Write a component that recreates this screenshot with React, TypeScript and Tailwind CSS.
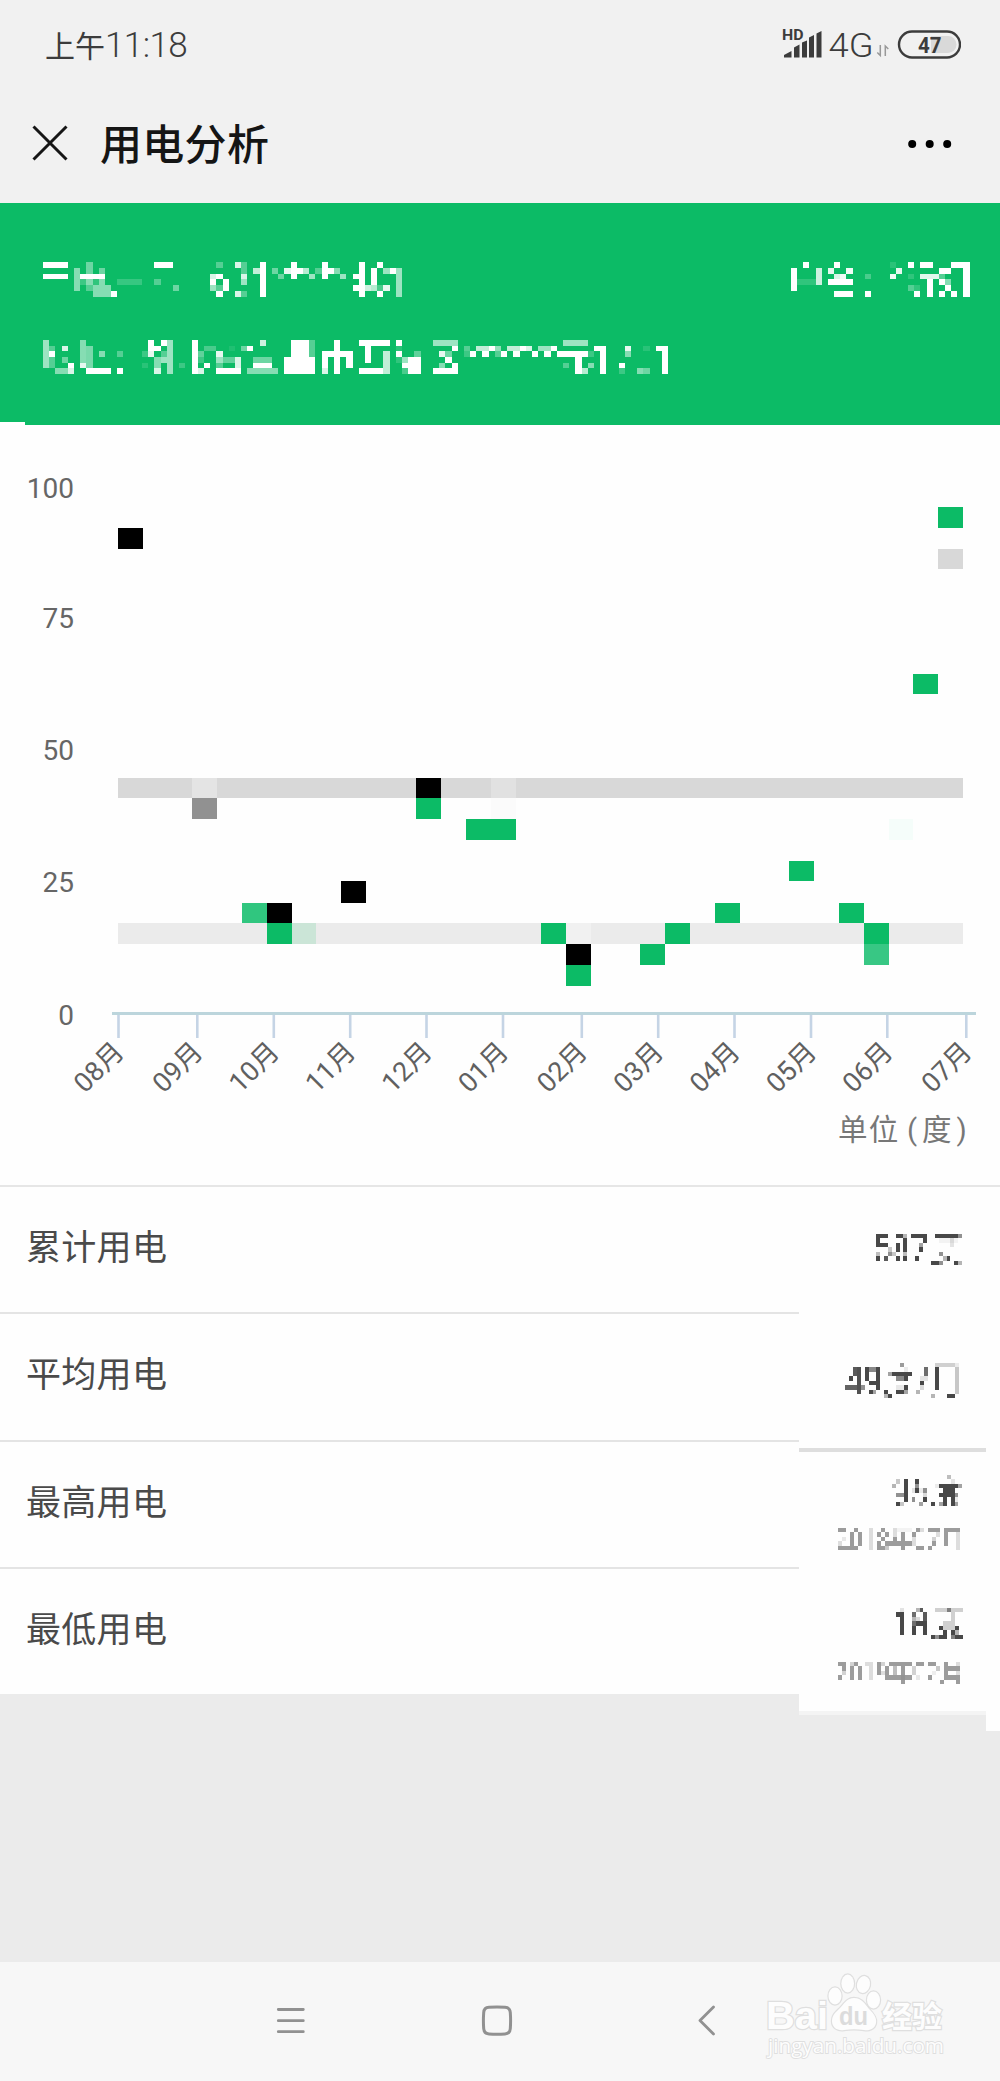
import React from 'react';

// [column, row, columns, rows, opacity]
type Block = [number, number, number, number, number];

interface MosaicProps {
  blocks: Block[];
  cols: number;
  rows: number;
  cellW: number;
  cellH: number;
  className?: string;
}

const ACCOUNT_NAME: Block[] = [
  [0, 0, 4, 1, 1], [0, 2, 4, 1, 1],
  [5, 1, 1, 4, 0.5], [7, 0, 1, 2, 0.4], [6, 2, 4, 1, 1], [9, 1, 1, 1, 0.4], [6, 3, 1, 1, 0.2], [7, 3, 1, 1, 0.5], [8, 3, 1, 1, 0.15], [9, 3, 1, 1, 0.5],
  [8, 4, 3, 1, 0.5], [7, 4, 1, 1, 0.3], [8, 5, 3, 1, 0.5], [11, 5, 1, 1, 1],
  [12, 3, 4, 1, 0.18], [18, 0, 3, 1, 1], [18, 3, 1, 1, 0.3], [21, 4, 1, 1, 0.4],
  [27, 2, 1, 1, 0.85], [27, 3, 1, 1, 1], [27, 4, 1, 1, 0.6], [28, 0, 1, 1, 0.3], [28, 2, 1, 1, 1], [28, 4, 1, 1, 0.3], [28, 5, 1, 1, 1], [29, 3, 1, 2, 1],
  [31, 0, 1, 1, 0.85], [31, 5, 1, 1, 0.85], [32, 0, 1, 2, 0.3], [32, 2, 1, 1, 0.85], [32, 3, 1, 1, 0.6], [32, 5, 1, 1, 0.3],
  [34, 1, 1, 1, 0.75], [35, 0, 1, 6, 1],
  [37, 1, 1, 1, 0.4], [38, 2, 1, 1, 0.4], [39, 1, 1, 1, 0.9], [40, 0, 1, 3, 1], [41, 1, 1, 1, 1], [42, 1, 1, 1, 0.7], [43, 2, 1, 1, 0.6],
  [44, 1, 1, 1, 0.3], [45, 0, 1, 3, 1], [46, 1, 1, 1, 1], [47, 1, 1, 1, 0.5], [48, 2, 1, 1, 0.6],
  [50, 2, 1, 1, 1], [50, 4, 1, 1, 1], [51, 0, 1, 6, 1], [52, 4, 1, 1, 0.8], [53, 1, 1, 3, 1], [53, 4, 1, 1, 0.7],
  [54, 0, 1, 1, 1], [54, 4, 1, 1, 0.25], [54, 5, 1, 1, 1], [55, 1, 1, 1, 0.6], [55, 4, 1, 1, 0.9], [56, 1, 1, 1, 1], [57, 1, 1, 5, 0.6],
];

const ACCOUNT_NO: Block[] = [
  [0, 1, 1, 4, 1], [1, 3, 3, 1, 0.15], [2, 0, 1, 1, 1], [4, 1, 1, 3, 0.8],
  [6, 1, 1, 1, 0.9], [7, 0, 1, 1, 1], [7, 2, 1, 1, 0.85], [8, 2, 1, 1, 0.95], [9, 1, 1, 1, 0.95], [6, 3, 4, 1, 1], [7, 5, 3, 1, 1],
  [12, 2, 1, 1, 0.25], [12, 5, 1, 1, 1], [16, 0, 1, 1, 0.12], [16, 2, 1, 1, 0.95], [17, 1, 1, 1, 0.9],
  [19, 0, 1, 1, 1], [19, 2, 1, 1, 0.15], [19, 4, 1, 1, 0.3], [20, 4, 1, 1, 0.15], [20, 5, 1, 1, 1],
  [21, 0, 2, 1, 1], [21, 2, 3, 1, 0.88], [22, 3, 1, 3, 1],
  [24, 1, 2, 1, 1], [24, 2, 1, 1, 0.3], [24, 3, 1, 1, 1], [25, 3, 1, 1, 0.5], [25, 4, 1, 1, 1], [24, 5, 1, 1, 1], [26, 5, 1, 1, 1],
  [26, 0, 2, 1, 1], [28, 0, 1, 6, 1],
];

const ADDRESS: Block[] = [
  [0, 0, 1, 5, 0.6], [1, 1, 1, 1, 0.3], [1, 2, 1, 1, 1], [1, 3, 1, 2, 0.3], [3, 1, 1, 1, 0.85], [3, 3, 1, 1, 0.4], [4, 4, 1, 1, 1], [2, 5, 2, 1, 0.5], [4, 5, 1, 1, 0.85],
  [6, 0, 1, 4, 0.5], [6, 4, 1, 1, 0.9], [7, 1, 1, 4, 0.45], [7, 5, 4, 1, 1], [9, 2, 1, 1, 0.5], [12, 2, 1, 1, 0.3], [12, 5, 1, 1, 1],
  [16, 2, 1, 1, 0.2], [16, 4, 1, 1, 0.12], [17, 0, 1, 2, 1], [17, 2, 1, 1, 0.9], [18, 1, 1, 1, 1], [18, 3, 1, 2, 0.5], [18, 5, 1, 1, 0.85],
  [19, 0, 1, 1, 1], [19, 2, 1, 1, 0.3], [19, 3, 1, 1, 0.6], [20, 0, 1, 6, 0.6], [22, 4, 1, 1, 0.2],
  [24, 0, 1, 6, 1], [25, 2, 1, 1, 0.35], [25, 3, 1, 1, 0.2], [25, 5, 1, 1, 0.85], [26, 4, 1, 1, 1], [26, 1, 2, 1, 0.25],
  [28, 2, 1, 1, 0.9], [28, 3, 1, 1, 0.6], [28, 4, 1, 1, 0.3], [28, 5, 4, 1, 1], [29, 3, 2, 1, 0.35], [31, 3, 1, 2, 0.85], [30, 1, 1, 1, 0.08],
  [32, 1, 1, 1, 0.4], [33, 1, 1, 1, 1], [35, 0, 1, 1, 0.8], [34, 3, 3, 1, 0.4], [34, 4, 3, 1, 1], [33, 5, 5, 1, 0.5],
  [40, 0, 3, 3, 1], [43, 0, 1, 3, 0.3], [39, 3, 5, 3, 1],
  [45, 2, 2, 1, 1], [48, 2, 2, 1, 1], [45, 3, 1, 2, 1], [45, 5, 1, 1, 0.85], [47, 0, 1, 6, 1], [49, 3, 1, 2, 1],
  [51, 0, 5, 1, 1], [52, 1, 1, 3, 1], [51, 5, 4, 1, 1], [55, 2, 1, 4, 0.75],
  [57, 0, 1, 1, 1], [57, 1, 1, 1, 0.12], [57, 2, 1, 1, 1], [57, 3, 1, 1, 0.15], [58, 3, 1, 1, 0.6], [58, 4, 1, 1, 1], [58, 5, 1, 1, 0.25], [59, 3, 2, 3, 1], [60, 2, 1, 1, 0.35],
  [63, 0, 4, 1, 0.6], [66, 1, 1, 1, 1], [64, 2, 1, 1, 0.9], [65, 2, 1, 1, 0.4], [65, 3, 1, 1, 1], [64, 4, 1, 1, 0.5], [66, 4, 1, 1, 1], [63, 5, 4, 1, 1],
  [68, 1, 1, 1, 0.3], [68, 2, 1, 1, 0.2], [69, 2, 1, 1, 1], [70, 1, 2, 1, 0.75], [71, 2, 1, 1, 1], [72, 1, 1, 1, 1], [73, 1, 1, 1, 0.55], [73, 2, 1, 1, 0.3],
  [74, 2, 1, 1, 1], [75, 1, 2, 1, 0.75], [76, 2, 1, 1, 1], [77, 1, 1, 1, 1], [78, 1, 1, 1, 0.85], [79, 2, 1, 1, 1], [80, 1, 2, 1, 0.6], [81, 2, 1, 1, 1], [82, 1, 1, 1, 1],
  [84, 0, 4, 1, 0.6], [83, 2, 5, 1, 1], [86, 3, 1, 3, 1], [87, 5, 1, 1, 0.7], [84, 4, 1, 1, 0.3], [88, 2, 1, 1, 0.2], [88, 4, 1, 1, 0.5],
  [89, 1, 1, 1, 1], [90, 1, 1, 5, 1], [93, 4, 1, 1, 1], [93, 5, 1, 1, 0.2], [94, 1, 1, 1, 0.9], [94, 2, 1, 1, 0.5],
  [96, 5, 1, 1, 0.5], [97, 5, 1, 1, 0.4], [97, 1, 1, 1, 0.12], [99, 1, 1, 1, 1], [100, 1, 1, 5, 1],
];

const TOTAL: Block[] = [
  [0, 0, 3, 1, 1], [0, 1, 1, 1, 1], [0, 2, 3, 1, 1], [0, 4, 1, 1, 0.35], [0, 5, 1, 1, 1], [2, 5, 1, 1, 0.9], [3, 3, 1, 1, 0.3], [3, 4, 1, 1, 0.6], [4, 4, 1, 1, 0.3],
  [5, 0, 2, 1, 1], [7, 0, 1, 1, 0.4], [5, 2, 1, 2, 1], [5, 5, 1, 1, 1], [7, 1, 1, 3, 1], [7, 4, 1, 1, 0.35], [7, 5, 1, 1, 1],
  [9, 0, 4, 1, 1], [12, 1, 1, 1, 1], [11, 2, 1, 1, 0.5], [11, 3, 1, 1, 1], [10, 5, 1, 1, 1],
  [15, 0, 6, 1, 1], [21, 0, 1, 1, 0.6], [16, 1, 5, 1, 0.06], [19, 1, 1, 2, 0.15], [16, 4, 1, 1, 0.6], [17, 5, 1, 1, 0.4], [18, 5, 1, 1, 1],
  [14, 6, 2, 1, 1], [16, 6, 1, 1, 0.6], [20, 6, 1, 1, 1], [21, 6, 1, 1, 0.4],
];

const AVERAGE: Block[] = [
  [2, 1, 1, 2, 0.9], [3, 1, 1, 6, 0.95], [1, 3, 1, 1, 1], [0, 5, 3, 1, 0.85], [4, 5, 1, 1, 0.6],
  [5, 1, 1, 3, 1], [6, 1, 2, 1, 0.65], [8, 1, 1, 5, 1], [6, 4, 2, 1, 1], [6, 6, 1, 1, 1], [7, 6, 1, 1, 0.5],
  [10, 6, 1, 1, 1], [10, 7, 1, 1, 0.4], [11, 7, 1, 1, 1],
  [14, 0, 1, 1, 0.55], [15, 1, 1, 1, 0.1], [11, 2, 1, 1, 0.5], [12, 2, 5, 1, 1], [13, 3, 2, 1, 0.65], [15, 3, 1, 1, 1], [13, 5, 2, 1, 0.12], [15, 5, 1, 1, 1], [13, 6, 2, 1, 1], [15, 6, 1, 1, 0.5],
  [18, 6, 1, 1, 0.4], [19, 3, 1, 1, 0.15], [19, 4, 1, 1, 1], [19, 5, 1, 1, 0.2], [20, 1, 1, 2, 0.8], [20, 3, 1, 1, 0.15],
  [23, 0, 5, 1, 0.25], [23, 1, 1, 5, 1], [28, 0, 1, 1, 0.1], [28, 1, 1, 6, 0.3], [22, 7, 1, 1, 0.4], [26, 7, 2, 1, 1],
];

const HIGHEST: Block[] = [
  [1, 1, 1, 1, 0.3], [0, 2, 1, 1, 0.4], [3, 1, 1, 5, 1], [1, 4, 2, 1, 0.6], [1, 6, 1, 1, 1], [2, 6, 1, 1, 0.3],
  [6, 1, 1, 1, 1], [6, 2, 1, 1, 0.6], [6, 3, 1, 1, 1], [5, 3, 1, 1, 0.15], [5, 5, 1, 1, 0.6], [7, 3, 1, 1, 0.1], [8, 3, 1, 1, 0.6], [8, 4, 1, 1, 0.2], [8, 5, 1, 1, 1], [7, 6, 1, 1, 0.5], [10, 6, 1, 1, 1],
  [14, 0, 1, 1, 0.35], [15, 1, 1, 1, 0.15], [11, 2, 1, 1, 0.1], [12, 2, 5, 1, 1], [17, 2, 1, 1, 0.5], [13, 3, 3, 1, 1], [12, 4, 4, 1, 1], [16, 4, 1, 1, 0.6],
  [13, 5, 1, 2, 1], [15, 5, 1, 2, 1], [12, 6, 1, 1, 0.5], [16, 5, 1, 1, 0.1], [16, 6, 1, 1, 0.5],
];

const HIGHEST_MONTH: Block[] = [
  [0, 0, 2, 1, 0.9], [1, 2, 1, 1, 0.2], [0, 3, 1, 1, 0.3], [0, 4, 3, 1, 0.9],
  [4, 0, 1, 1, 0.9], [3, 1, 1, 3, 0.9], [5, 1, 1, 3, 0.9], [3, 4, 2, 1, 0.9], [8, 0, 1, 5, 0.3],
  [11, 0, 1, 1, 0.9], [10, 1, 1, 1, 0.9], [12, 1, 1, 1, 0.9], [11, 2, 1, 1, 0.9], [10, 3, 1, 1, 0.9], [12, 3, 7, 1, 0.9], [10, 4, 2, 1, 0.9], [12, 4, 1, 1, 0.5],
  [14, 0, 1, 2, 0.3], [14, 2, 1, 1, 0.9], [16, 1, 1, 2, 0.9], [16, 4, 1, 1, 0.9], [15, 0, 4, 1, 0.1],
  [20, 0, 1, 1, 0.9], [21, 0, 1, 1, 0.3], [19, 1, 1, 1, 0.9], [19, 2, 1, 2, 0.3], [20, 4, 2, 1, 0.9],
  [23, 0, 3, 1, 0.9], [25, 1, 1, 1, 0.3], [24, 2, 1, 1, 0.4], [24, 3, 1, 1, 0.9], [23, 4, 1, 1, 0.9],
  [27, 0, 4, 1, 0.9], [27, 1, 1, 3, 0.9], [30, 1, 1, 4, 0.3],
];

const LOWEST: Block[] = [
  [1, 0, 1, 1, 0.15], [0, 1, 1, 1, 1], [1, 1, 1, 5, 1],
  [5, 0, 1, 1, 0.4], [6, 0, 1, 1, 0.9], [4, 1, 1, 1, 0.8], [4, 2, 1, 1, 0.4], [5, 2, 1, 1, 0.2], [7, 1, 1, 2, 0.9], [4, 3, 1, 1, 0.8], [5, 3, 3, 1, 1], [4, 4, 1, 2, 1], [7, 4, 1, 2, 1],
  [10, 0, 3, 1, 0.25], [13, 0, 1, 1, 0.7], [14, 0, 3, 1, 0.25], [14, 1, 1, 2, 0.25], [12, 3, 3, 2, 0.25], [11, 4, 1, 1, 1], [15, 4, 1, 1, 1], [12, 5, 1, 1, 1], [14, 5, 1, 1, 1], [15, 5, 1, 1, 0.4],
  [9, 6, 1, 1, 1], [10, 6, 1, 1, 0.6], [11, 6, 2, 1, 1], [14, 6, 1, 1, 0.7], [15, 6, 2, 1, 1],
];

const LOWEST_MONTH: Block[] = [
  [0, 0, 2, 1, 0.9], [1, 1, 1, 1, 0.9], [1, 2, 1, 1, 0.4], [0, 3, 1, 1, 0.9],
  [3, 0, 1, 1, 0.4], [4, 0, 1, 1, 0.9], [3, 1, 1, 3, 0.9], [5, 1, 1, 3, 0.9], [7, 0, 1, 1, 0.3], [8, 0, 1, 4, 0.3],
  [10, 0, 1, 3, 0.9], [11, 0, 1, 1, 0.4], [12, 1, 1, 3, 0.9], [11, 2, 1, 1, 0.3], [13, 0, 6, 1, 0.9], [14, 1, 1, 2, 0.6], [16, 1, 1, 4, 0.9], [13, 3, 6, 1, 0.9],
  [20, 0, 2, 1, 0.9], [19, 1, 1, 2, 0.4], [20, 3, 1, 1, 0.2], [23, 0, 2, 1, 0.9], [25, 1, 1, 1, 0.5], [24, 2, 1, 1, 0.15], [23, 3, 1, 1, 0.9],
  [27, 0, 1, 1, 0.9], [27, 1, 4, 1, 0.9], [27, 2, 1, 2, 0.9], [30, 0, 1, 1, 0.3], [30, 2, 1, 1, 0.3], [28, 3, 3, 1, 0.9], [26, 4, 1, 1, 0.9], [30, 4, 1, 1, 0.9],
];

function Mosaic({ blocks, cols, rows, cellW, cellH, className }: MosaicProps) {
  return (
    <svg
      width={Math.ceil(cols * cellW)}
      height={Math.ceil(rows * cellH)}
      className={`block shrink-0 ${className ?? ''}`}
      shapeRendering="crispEdges"
      fill="currentColor"
    >
      {blocks.map(([c, r, w, h, o], i) => (
        <rect key={i} x={c * cellW} y={r * cellH} width={w * cellW} height={h * cellH} opacity={o} />
      ))}
    </svg>
  );
}

// [x, y, width, height, colour]
const CHART_BLOCKS: [number, number, number, number, string][] = [
  [118.4, 777.5, 844.5, 20.5, '#d8d8d8'],
  [118.4, 923, 844.5, 21, '#ebebeb'],
  [118.4, 527.5, 25, 21, '#000'],
  [192.4, 777.5, 25, 20.5, '#e4e4e4'],
  [192.4, 798, 25, 21, '#919191'],
  [242.4, 902.5, 25, 20.5, '#30c67f'],
  [267.4, 902.5, 25, 20.5, '#000'],
  [267.4, 923, 25, 21, '#0cbb66'],
  [292.4, 923, 24, 21, '#cbe5d7'],
  [341.4, 881, 25, 21.5, '#000'],
  [416.4, 777.5, 25, 20.5, '#000'],
  [416.4, 798, 25, 21, '#0cbb66'],
  [491, 777.5, 25, 20.5, '#e1e1e1'],
  [491, 798, 25, 21, '#fbfbfb'],
  [465.7, 819, 50.2, 21, '#0cbb66'],
  [540.7, 923, 25, 21, '#0cbb66'],
  [565.8, 923, 25, 21, '#f1f1f1'],
  [565.8, 944, 25, 21, '#000'],
  [565.8, 965, 25, 21, '#0cbb66'],
  [640, 944, 25, 21, '#0cbb66'],
  [665, 923, 25, 21, '#0cbb66'],
  [714.8, 902.5, 25, 20.5, '#0cbb66'],
  [789, 861, 25, 20, '#0cbb66'],
  [839, 902.5, 25, 20.5, '#0cbb66'],
  [864, 923, 25, 21, '#0cbb66'],
  [864, 944, 25, 21, '#38c784'],
  [889, 819, 24, 21, '#f5fdfa'],
  [913, 673.5, 25, 20.5, '#0cbb66'],
  [938, 507, 25, 21, '#0cbb66'],
  [938, 549, 25, 20, '#d8d8d8'],
];

const Y_LABELS = [
  { text: '100', y: 498 },
  { text: '75', y: 627.5 },
  { text: '50', y: 759.7 },
  { text: '25', y: 892.3 },
  { text: '0', y: 1024.7 },
];

const MONTHS = [
  { text: '08月', x: 118.5 },
  { text: '09月', x: 197.3 },
  { text: '10月', x: 273.8 },
  { text: '11月', x: 350.2 },
  { text: '12月', x: 426.5 },
  { text: '01月', x: 503 },
  { text: '02月', x: 581.8 },
  { text: '03月', x: 658.2 },
  { text: '04月', x: 734.5 },
  { text: '05月', x: 811 },
  { text: '06月', x: 887.3 },
  { text: '07月', x: 966.3 },
];

function StatusBar() {
  return (
    <div className="flex h-[90px] items-center justify-between pl-[45px] pr-[39px] text-[#3c3c3c]">
      <div className="flex items-baseline">
        <span className="text-[30px] leading-none">上午</span>
        <span className="font-['Roboto'] text-[35px] font-light leading-none tracking-[-0.6px]">11:18</span>
      </div>
      <svg width="181" height="50" viewBox="780 18 181 50" className="mt-[-3px]">
        <text x="782" y="39" fontFamily="Roboto" fontSize="14.5" fontWeight="700" fill="#3c3c3c" textLength="21.5" lengthAdjust="spacingAndGlyphs">HD</text>
        <path d="M784 56.5v-2.5l7.5-4v6.5zM794 56.5v-10l5.5-3v13zM802 56.5v-15l5-2v17zM809 56.5v-20l5-2.5v22.5zM816.5 56.5v-24l5-2.5v26.5z" fill="#3c3c3c" />
        <text x="828.5" y="56" fontFamily="Roboto" fontSize="34" fontWeight="300" fill="#3c3c3c" textLength="45" lengthAdjust="spacingAndGlyphs">4G</text>
        <path d="M880.3 44v10.5l-3-3M885.3 55v-10l3 3" fill="none" stroke="#999" strokeWidth="1.5" />
        <rect x="899" y="30.5" width="61" height="26" rx="13" fill="none" stroke="#3c3c3c" strokeWidth="2.4" />
        <path d="M931 35h17a8.5 8.5 0 0 1 0 17h-17z" fill="#d9d9d9" />
        <text x="918" y="51.8" fontFamily="Roboto" fontSize="22.5" fontWeight="700" fill="#3c3c3c" textLength="23.5" lengthAdjust="spacingAndGlyphs">47</text>
      </svg>
    </div>
  );
}

function TitleBar() {
  return (
    <div className="flex h-[113px] items-center pl-[31px] pr-[48px] pb-[7px]">
      <svg width="38" height="38" viewBox="0 0 38 38">
        <path d="M2.5 2.5l33 33M35.5 2.5l-33 33" stroke="#151515" strokeWidth="3" />
      </svg>
      <h1 className="ml-[31px] mt-[6px] text-[42px] font-medium leading-none tracking-[0.3px] text-[#151515]">用电分析</h1>
      <svg width="44" height="10" viewBox="0 0 44 10" className="ml-auto mt-[2px]">
        <circle cx="4.2" cy="5" r="4" />
        <circle cx="21.7" cy="5" r="4" />
        <circle cx="39.2" cy="5" r="4" />
      </svg>
    </div>
  );
}

function AccountBanner() {
  return (
    <div className="relative h-[222px] bg-[#0cbb66] pl-[43px] pr-[30px] pt-[59px] text-white">
      <div className="flex justify-between">
        <Mosaic blocks={ACCOUNT_NAME} cols={58} rows={6} cellW={6.19} cellH={5.75} />
        <Mosaic blocks={ACCOUNT_NO} cols={29} rows={6} cellW={6.16} cellH={5.75} />
      </div>
      <Mosaic blocks={ADDRESS} cols={101} rows={6} cellW={6.19} cellH={5.65} className="mt-[43px]" />
      <div className="absolute bottom-0 left-0 h-[3px] w-[25px] bg-white" />
    </div>
  );
}

function UsageChart() {
  return (
    <svg width="1000" height="760" viewBox="0 425 1000 760" className="block bg-[#fefefe]" fontFamily="Roboto, 'Noto Sans CJK SC', sans-serif">
      {Y_LABELS.map(l => (
        <text key={l.text} x="74" y={l.y} textAnchor="end" fontSize="28" fill="#666">{l.text}</text>
      ))}
      <g shapeRendering="crispEdges">
        {CHART_BLOCKS.map(([x, y, w, h, fill], i) => (
          <rect key={i} x={x} y={y} width={w} height={h} fill={fill} />
        ))}
      </g>
      <path d="M112 1013.5H976" stroke="#bcd5dc" strokeWidth="3" />
      {MONTHS.map(m => (
        <g key={m.text}>
          <path d={`M${m.x} 1015v23`} stroke="#c5d4e5" strokeWidth="2.6" />
          <text transform={`translate(${m.x + 7} 1053.5) rotate(-45)`} textAnchor="end" fontSize="27" fill="#606060">{m.text}</text>
        </g>
      ))}
      <text transform="translate(838 1140)" x="0 30.7 69 84 118.5" fontSize="29.5" fill="#777">单位(度)</text>
    </svg>
  );
}

const ROWS = ['累计用电', '平均用电', '最高用电', '最低用电'];

function Summary() {
  return (
    <div className="border-t-2 border-[#e6e6e6]">
      <div className="flex items-start">
        <div className="w-[799px] bg-[#fefefe]">
          {ROWS.map(label => (
            <div key={label} className="h-[127.25px] border-b-2 border-[#e4e4e4] pl-[26px] pt-[43px] last:border-[#ebebeb]">
              <span className="block text-[35px] leading-[38px] tracking-[0.3px] text-[#4a4a4a]">{label}</span>
            </div>
          ))}
        </div>
        <div className="w-[187px] bg-[#fefefe] text-[#484848]">
          <Mosaic blocks={TOTAL} cols={22} rows={7} cellW={3.92} cellH={4.42} className="ml-[77px] mt-[47px]" />
          <Mosaic blocks={AVERAGE} cols={29} rows={8} cellW={3.93} cellH={4.42} className="ml-[46px] mt-[98px]" />
          <div className="mt-[49px] h-1 bg-[#dedede]" />
          <Mosaic blocks={HIGHEST} cols={18} rows={7} cellW={3.91} cellH={4.42} className="ml-[93px] mt-[23px]" />
          <div className="text-[#919191]">
            <Mosaic blocks={HIGHEST_MONTH} cols={31} rows={5} cellW={3.92} cellH={4.42} className="ml-[39px] mt-[22px]" />
          </div>
          <Mosaic blocks={LOWEST} cols={17} rows={7} cellW={3.92} cellH={4.42} className="ml-[97px] mt-[57px]" />
          <div className="text-[#919191]">
            <Mosaic blocks={LOWEST_MONTH} cols={31} rows={5} cellW={3.92} cellH={4.42} className="ml-[39px] mt-[23px]" />
          </div>
          <div className="mt-[26px] h-1 bg-[#f4f4f4]" />
        </div>
        <div className="h-[544px] flex-1 bg-[#fefefe]" />
      </div>
    </div>
  );
}

function Watermark() {
  return (
    <svg
      width="184"
      height="96"
      viewBox="764 1970 184 96"
      className="absolute left-[764px] top-[8px]"
      fill="#fdfdfd"
      stroke="#dfdfdf"
      strokeWidth="2.4"
      paintOrder="stroke"
    >
      <text x="766" y="2029" fontFamily="Liberation Sans" fontWeight="700" fontSize="38" textLength="62" lengthAdjust="spacingAndGlyphs">Bai</text>
      <ellipse cx="835" cy="1996" rx="6.5" ry="8.5" />
      <ellipse cx="847.7" cy="1983.5" rx="6.3" ry="9" />
      <ellipse cx="863.5" cy="1984.5" rx="6.5" ry="8.5" transform="rotate(12 863.5 1984.5)" />
      <ellipse cx="873.5" cy="2000" rx="6.5" ry="8.5" />
      <path d="M854 1998c8 0 11 6 15 11 5 5 8 9 7 14-1 6-7 8-12 7-7-1-13-1-20 0-6 1-12-2-12-9 0-6 4-9 8-13s7-10 14-10z" />
      <text x="839" y="2024.5" fontFamily="Liberation Sans" fontWeight="700" fontSize="25" fill="#dcdcdc" stroke="none" textLength="29" lengthAdjust="spacingAndGlyphs">du</text>
      <text x="882" y="2026.5" fontFamily="Noto Sans CJK SC" fontWeight="700" fontSize="30">经验</text>
      <text x="768" y="2053" fontFamily="Open Sans" fontSize="19.5" strokeWidth="1.8" textLength="176" lengthAdjust="spacingAndGlyphs">jingyan.baidu.com</text>
    </svg>
  );
}

function NavBar() {
  return (
    <div className="relative h-[119px] bg-[#f7f7f7]">
      <div className="flex h-full items-center pb-[2px] pl-[276px] text-[#919191]">
        <svg width="29" height="30" viewBox="0 0 29 30" fill="none" stroke="currentColor" strokeWidth="2.8" strokeLinecap="round">
          <path d="M2.3 3.5h25M2.3 14.7h25M2.3 25.7h25" />
        </svg>
        <svg width="32" height="32" viewBox="0 0 32 32" className="ml-[176px]" fill="none" stroke="currentColor" strokeWidth="3">
          <path d="M8 2.3q8-.6 16 0 5 .3 5.3 5.3.6 8 0 16-.3 5-5.3 5.3-8 .6-16 0-5-.3-5.3-5.3-.6-8 0-16 .3-5 5.300-5.300z" />
        </svg>
        <svg width="18" height="32" viewBox="0 0 18 32" className="ml-[185px]" fill="none" stroke="currentColor" strokeWidth="2.8" strokeLinecap="round" strokeLinejoin="round">
          <path d="M15.5 2L2 15.5l13.5 13.5" />
        </svg>
      </div>
      <Watermark />
    </div>
  );
}

export default function App() {
  return (
    <div className="flex h-[2081px] w-[1000px] flex-col overflow-hidden bg-[#ebebeb] font-['Roboto','Noto_Sans_CJK_SC',sans-serif]">
      <header className="bg-[#f1f1f1]">
        <StatusBar />
        <TitleBar />
      </header>
      <AccountBanner />
      <UsageChart />
      <Summary />
      <div className="mt-auto">
        <NavBar />
      </div>
    </div>
  );
}
